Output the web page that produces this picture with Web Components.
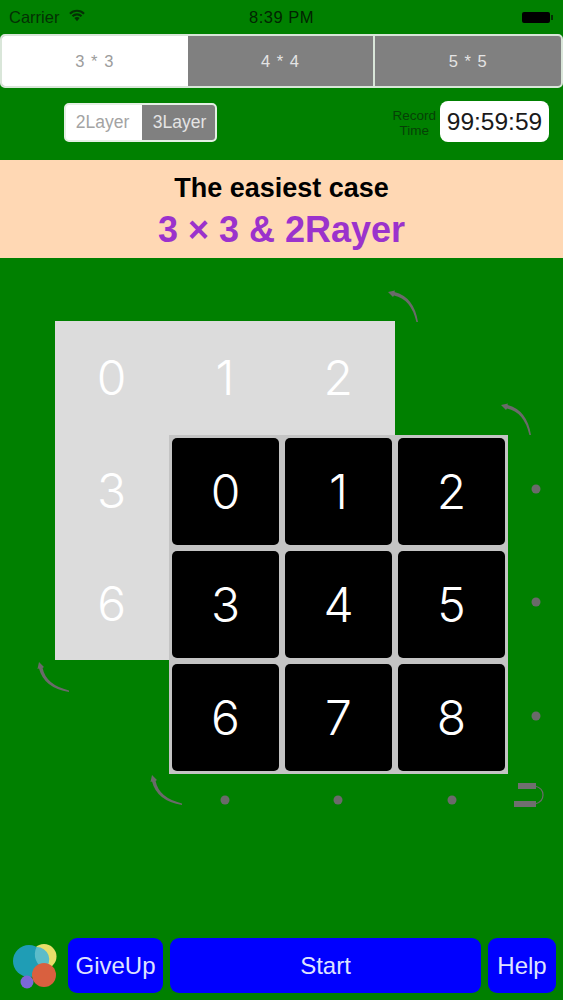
<!DOCTYPE html>
<html>
<head>
<meta charset="utf-8">
<title>Puzzle</title>
<style>
  html, body { margin: 0; padding: 0; }
  body {
    width: 563px;
    height: 1000px;
    overflow: hidden;
    background: #008000;
    font-family: "Liberation Sans", Arial, sans-serif;
    display: flex;
    flex-direction: column;
  }
</style>
</head>
<body>
<status-bar></status-bar>
<seg-control id="size" options="3 * 3,4 * 4,5 * 5" selected="0"></seg-control>
<option-row></option-row>
<info-banner title-text="The easiest case" sub-text="3 × 3 &amp; 2Rayer"></info-banner>
<puzzle-board></puzzle-board>
<action-bar></action-bar>

<script>
class StatusBar extends HTMLElement {
  constructor() {
    super();
    this.attachShadow({ mode: 'open' });
  }

  connectedCallback() {
    this.shadowRoot.innerHTML = `
      <style>
        :host {
          display: grid;
          grid-template-columns: 1fr auto 1fr;
          align-items: center;
          height: 34px;
          padding: 0 9px;
          color: #043004;
          font-size: 16.5px;
          box-sizing: border-box;
        }
        .left { display: flex; align-items: center; gap: 10px; }
        .time { font-size: 16.5px; letter-spacing: .5px; color: #022402; }
        .right { justify-self: end; display: flex; align-items: center; margin-right: 1px; }
        .batt { width: 28px; height: 11px; background: #000; border-radius: 2px; }
        .nub { width: 2px; height: 5px; background: #043004; margin-left: 1px; }
      </style>
      <div class="left">
        <span>Carrier</span>
        <svg width="16" height="13" viewBox="0 0 17 13" style="margin-top:-3px">
          <path d="M1 4.6a10.6 10.6 0 0 1 15 0" fill="none" stroke="#043004" stroke-width="2.2"/>
          <path d="M3.7 7.3a6.8 6.8 0 0 1 9.6 0" fill="none" stroke="#043004" stroke-width="2.2"/>
          <path d="M5.7 9.2a3.8 3.8 0 0 1 5.6 0L8.5 12.6z" fill="#043004"/>
        </svg>
      </div>
      <span class="time">8:39 PM</span>
      <div class="right"><div class="batt"></div><div class="nub"></div></div>
    `;
  }
}

class SegControl extends HTMLElement {
  constructor() {
    super();
    this.attachShadow({ mode: 'open' });
  }

  connectedCallback() {
    const options = this.getAttribute('options').split(',');
    const selected = parseInt(this.getAttribute('selected'));
    this.shadowRoot.innerHTML = `
      <style>
        :host {
          display: flex;
          height: 54px;
          box-sizing: border-box;
          border: 2px solid #d9e6d9;
          border-radius: 5px;
          overflow: hidden;
          font-size: 16.5px;
          background: #808080;
        }
        div {
          flex: 1;
          display: flex;
          align-items: center;
          justify-content: center;
          color: #e4e4e4;
          letter-spacing: 1px;
        }
        div + div { border-left: 2px solid #d9e6d9; }
        div.on { background: #fff; color: #9c9c9c; border: 0; }
        div.on + div { border-left: 0; }
      </style>
      ${options.map((o, i) => `<div class="${i === selected ? 'on' : ''}">${o}</div>`).join('')}
    `;
  }
}

class OptionRow extends HTMLElement {
  constructor() {
    super();
    this.attachShadow({ mode: 'open' });
  }

  connectedCallback() {
    this.shadowRoot.innerHTML = `
      <style>
        :host {
          display: flex;
          align-items: flex-start;
          height: 55px;
          padding: 14px 14px 0 64px;
          box-sizing: border-box;
          margin-bottom: 17px;
        }
        .layers {
          display: flex;
          width: 153px;
          height: 39px;
          margin-top: 1px;
          box-sizing: border-box;
          border: 2px solid #e4efe4;
          border-radius: 5px;
          overflow: hidden;
          font-size: 17.5px;
          background: #fff;
        }
        .layers span { display: flex; align-items: center; justify-content: center; box-sizing: border-box; }
        .l2 { width: 76px; color: #a3a3a3; padding-right: 3px; }
        .l3 { flex: 1; background: #808080; color: #e4e4e4; padding-left: 2px; }
        .label {
          margin-left: auto;
          margin-right: 4px;
          margin-top: 6px;
          text-align: center;
          font-size: 13.5px;
          line-height: 15px;
          color: #064006;
        }
        .time {
          width: 109px;
          height: 41px;
          margin-top: -1px;
          background: #fff;
          border-radius: 8px;
          color: #1a1a1a;
          font-size: 24.5px;
          display: flex;
          align-items: center;
          justify-content: center;
        }
      </style>
      <div class="layers"><span class="l2">2Layer</span><span class="l3">3Layer</span></div>
      <div class="label">Record<br>Time</div>
      <div class="time">99:59:59</div>
    `;
  }
}

class InfoBanner extends HTMLElement {
  constructor() {
    super();
    this.attachShadow({ mode: 'open' });
  }

  connectedCallback() {
    this.shadowRoot.innerHTML = `
      <style>
        :host {
          display: flex;
          flex-direction: column;
          align-items: center;
          height: 98px;
          box-sizing: border-box;
          padding-top: 13px;
          background: #ffd8b4;
          font-weight: bold;
        }
        .t { color: #000; font-size: 27px; line-height: 30px; }
        .s { color: #9b32cc; font-size: 36px; line-height: 42px; margin-top: 6px; }
      </style>
      <div class="t">${this.getAttribute('title-text')}</div>
      <div class="s">${this.getAttribute('sub-text').replace('&', '&amp;')}</div>
    `;
  }
}

class TileGrid extends HTMLElement {
  constructor() {
    super();
    this.attachShadow({ mode: 'open' });
  }

  connectedCallback() {
    const solid = this.hasAttribute('solid');
    // the back layer's other cells sit under the front layer, so they stay empty
    const cells = solid ? [0, 1, 2, 3, 4, 5, 6, 7, 8] : [0, 1, 2, 3, '', '', 6, '', ''];
    this.shadowRoot.innerHTML = `
      <style>
        :host {
          position: absolute;
          left: ${this.getAttribute('x')}px;
          top: ${this.getAttribute('y')}px;
          width: ${solid ? 339 : 340}px;
          height: 339px;
          box-sizing: border-box;
          display: grid;
          grid-template-columns: repeat(3, 1fr);
          grid-template-rows: repeat(3, 1fr);
          font-family: Inter, "Liberation Sans", sans-serif;
          font-weight: 300;
          font-size: 48px;
          color: #fff;
          background: ${solid ? '#c4c4c4' : '#dcdcdc'};
          ${solid ? 'padding: 3px; gap: 6px;' : ''}
        }
        div { display: flex; align-items: center; justify-content: center; }
        ${solid ? 'div { background: #000; border-radius: 5px; }' : ''}
      </style>
      ${cells.map(c => `<div>${c}</div>`).join('')}
    `;
  }
}

class PuzzleBoard extends HTMLElement {
  constructor() {
    super();
    this.attachShadow({ mode: 'open' });
  }

  connectedCallback() {
    // turn arrows: small head, then a thin tapering curve
    const arc = (x, y, flip) => `<path d="M0 -1L7 -2.5L6.5 -1Q26 4 30 29L28.4 29Q23 6 6 2.6L5 4z" transform="translate(${x} ${y})${flip ? ' rotate(-90) scale(-1 1)' : ''}" fill="#6a6a6a"/>`;
    const dots = [[225, 800], [338, 800], [452, 800], [536, 489], [536, 602], [536, 716]];
    this.shadowRoot.innerHTML = `
      <style>
        :host { display: block; position: relative; flex: 1; }
        svg { position: absolute; left: 0; top: 0; filter: blur(.4px); }
      </style>
      <svg width="563" height="681" viewBox="0 258 563 681">
        ${arc(388, 293)}
        ${arc(501, 406)}
        ${arc(40, 662, true)}
        ${arc(153, 775, true)}
        ${dots.map(d => `<circle cx="${d[0]}" cy="${d[1]}" r="4.5" fill="#6a6a6a"/>`).join('')}
        <path d="M535 786Q543 788 543 795Q543 802 535 804" fill="none" stroke="#6a6a6a" stroke-width="1.2"/>
        <path d="M518 786H536M514 804H536" fill="none" stroke="#6f6f6f" stroke-width="6"/>
      </svg>
      <tile-grid x="55" y="63"></tile-grid>
      <tile-grid x="169" y="177" solid></tile-grid>
    `;
  }
}

class AppButton extends HTMLElement {
  constructor() {
    super();
    this.attachShadow({ mode: 'open' });
  }

  connectedCallback() {
    this.shadowRoot.innerHTML = `
      <style>
        :host {
          display: flex;
          align-items: center;
          justify-content: center;
          background: #0000ff;
          color: #dfe3ff;
          border-radius: 9px;
          height: 55px;
          font-size: 24px;
        }
      </style>
      <slot></slot>
    `;
  }
}

class ActionBar extends HTMLElement {
  constructor() {
    super();
    this.attachShadow({ mode: 'open' });
  }

  connectedCallback() {
    this.shadowRoot.innerHTML = `
      <style>
        :host {
          display: flex;
          align-items: center;
          gap: 7px;
          height: 62px;
          padding: 0 7px 7px 13px;
          box-sizing: border-box;
        }
        svg { flex: none; margin-right: 4px; }
        .give { width: 95px; }
        .start { flex: 1; }
        .help { width: 68px; }
      </style>
      <svg width="44" height="46" viewBox="13 943 44 46">
        <circle cx="44" cy="956.5" r="12.5" fill="#e8de6a"/>
        <circle cx="29" cy="961" r="16" fill="#1f9db5"/>
        <path d="M36.6 946.9A12.5 12.5 0 0 1 44.7 969A16 16 0 0 1 36.6 946.9z" fill="#5cbcca"/>
        <circle cx="27" cy="982" r="6.5" fill="#7b68d8"/>
        <circle cx="44" cy="975" r="12" fill="#d9603f"/>
      </svg>
      <app-button class="give">GiveUp</app-button>
      <app-button class="start">Start</app-button>
      <app-button class="help">Help</app-button>
    `;
  }
}

customElements.define('status-bar', StatusBar);
customElements.define('seg-control', SegControl);
customElements.define('option-row', OptionRow);
customElements.define('info-banner', InfoBanner);
customElements.define('tile-grid', TileGrid);
customElements.define('puzzle-board', PuzzleBoard);
customElements.define('app-button', AppButton);
customElements.define('action-bar', ActionBar);
</script>
</body>
</html>
